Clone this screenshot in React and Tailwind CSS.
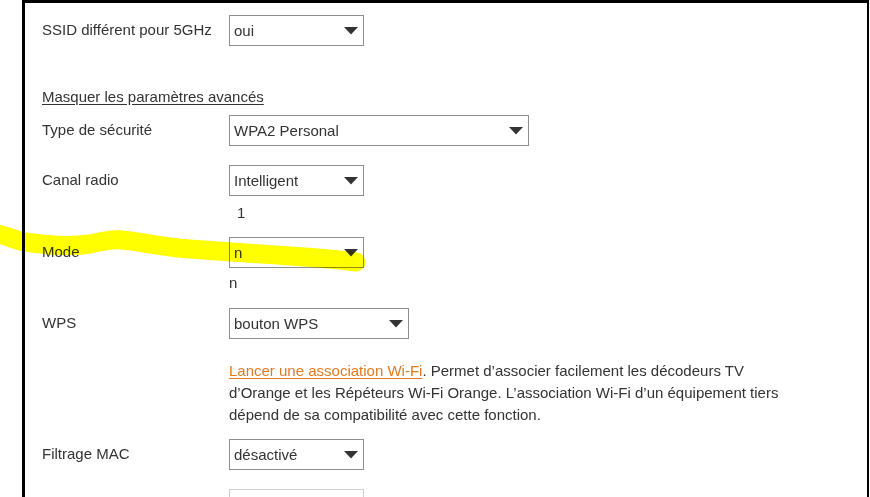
import React from 'react';

function Select({ value, width = 'w-[135px]' }) {
  return (
    <div className={`${width} h-[31px] border border-[#8e8e8e] bg-white flex items-center justify-between pl-[4px] pr-[5px] text-[15px] text-[#333]`}>
      <span className="pt-[1px]">{value}</span>
      <svg width="14" height="8" viewBox="0 0 14 8" className="shrink-0">
        <path d="M0 0 L14 0 L7 7.5 Z" fill="#333" />
      </svg>
    </div>
  );
}

function Row({ label, children, className = '' }) {
  return (
    <div className={`flex items-start ${className}`}>
      <div className="w-[187px] shrink-0 pt-[5px] leading-[20px]">{label}</div>
      <div>{children}</div>
    </div>
  );
}

export default function App() {
  return (
    <div className="w-[870px] h-[497px] bg-white relative overflow-hidden font-['Liberation_Sans',Arial,sans-serif] text-[15px] text-[#333]">
      <div className="ml-[22px] w-[847px] h-[540px] border-l-[3px] border-t-[3px] border-r-[2px] border-black pl-[17px] pt-[12px]">
        {/* SSID */}
        <Row label="SSID différent pour 5GHz">
          <Select value="oui" />
        </Row>

        {/* advanced toggle */}
        <div className="mt-[41px] leading-[20px]">
          <a className="underline underline-offset-2 text-[#333]">Masquer les paramètres avancés</a>
        </div>

        <Row label="Type de sécurité" className="mt-[8px]">
          <Select value="WPA2 Personal" width="w-[300px]" />
        </Row>

        <Row label="Canal radio" className="mt-[19px]">
          <Select value="Intelligent" />
          <div className="pl-[8px] mt-[7px] leading-[20px]">1</div>
        </Row>

        <Row label="Mode" className="mt-[14px]">
          <Select value="n" />
          <div className="mt-[5px] leading-[20px]">n</div>
        </Row>

        <Row label="WPS" className="mt-[15px]">
          <Select value="bouton WPS" width="w-[180px]" />
          <p className="mt-[21px] leading-[22px] whitespace-nowrap">
            <a className="text-[#e07a1f] underline underline-offset-2">Lancer une association Wi-Fi</a>. Permet d’associer facilement les décodeurs TV<br />
            d’Orange et les Répéteurs Wi-Fi Orange. L’association Wi-Fi d’un équipement tiers<br />
            dépend de sa compatibilité avec cette fonction.
          </p>
        </Row>

        <Row label="Filtrage MAC" className="mt-[13px]">
          <Select value="désactivé" />
        </Row>

        <div className="mt-[19px] ml-[187px] w-[135px] h-[31px] border border-[#cfcfcf]" />
      </div>

      {/* yellow highlighter stroke */}
      <svg className="absolute left-0 top-0 pointer-events-none mix-blend-multiply" width="870" height="497" viewBox="0 0 870 497">
        <path
          d="M -6 233 C 8 236, 15 240, 25 242 C 45 245, 70 247, 90 244 C 104 241, 112 239, 122 240 C 137 241, 152 245, 178 248 C 212 251, 250 253, 290 256 C 320 258, 340 260, 356 262"
          fill="none"
          stroke="#ffff00"
          strokeWidth="19"
          strokeLinecap="round"
          strokeLinejoin="round"
        />
      </svg>
    </div>
  );
}
